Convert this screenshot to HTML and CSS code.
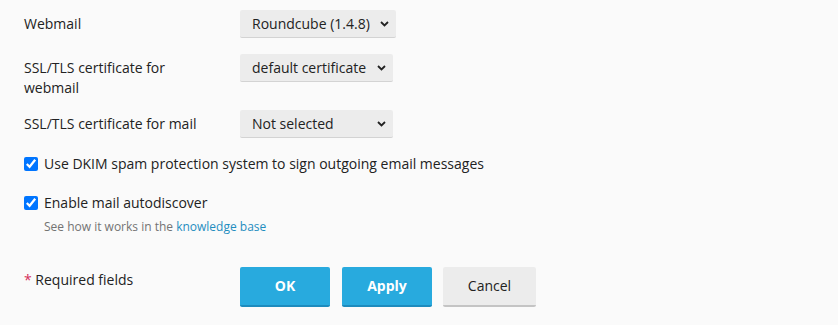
FILE: index.html
```html
<!DOCTYPE html>
<html lang="en">

<head>
    <meta charset="UTF-8">
    <meta name="viewport" content="width=device-width, initial-scale=1.0">
    <title>Mail Settings</title>
    <link rel="stylesheet" href="styles.css">
</head>

<body>
    <form class="form">
        <div class="form-row">
            <label class="form-label" for="webmail">Webmail</label>
            <div class="select-wrap">
                <select id="webmail" class="select">
                    <option>Roundcube (1.4.8)</option>
                    <option>Horde</option>
                    <option>None</option>
                </select>
                <svg class="chevron" width="9" height="6" viewBox="0 0 9 6"><path d="M1 1l3.5 3.5L8 1" fill="none" stroke="#222" stroke-width="1.8"/></svg>
            </div>
        </div>
        <div class="form-row">
            <label class="form-label" for="webmailCert">SSL/TLS certificate for webmail</label>
            <div class="select-wrap">
                <select id="webmailCert" class="select">
                    <option>default certificate</option>
                    <option>Not selected</option>
                </select>
                <svg class="chevron" width="9" height="6" viewBox="0 0 9 6"><path d="M1 1l3.5 3.5L8 1" fill="none" stroke="#222" stroke-width="1.8"/></svg>
            </div>
        </div>
        <div class="form-row">
            <label class="form-label" for="mailCert">SSL/TLS certificate for mail</label>
            <div class="select-wrap">
                <select id="mailCert" class="select">
                    <option>Not selected</option>
                    <option>default certificate</option>
                </select>
                <svg class="chevron" width="9" height="6" viewBox="0 0 9 6"><path d="M1 1l3.5 3.5L8 1" fill="none" stroke="#222" stroke-width="1.8"/></svg>
            </div>
        </div>

        <div class="check-row">
            <input type="checkbox" id="dkim" checked>
            <label for="dkim">Use DKIM spam protection system to sign outgoing email messages</label>
        </div>
        <div class="check-row check-row-last">
            <input type="checkbox" id="autodiscover" checked>
            <label for="autodiscover">Enable mail autodiscover</label>
        </div>
        <p class="hint">See how it works in the <a href="#">knowledge base</a></p>

        <div class="form-footer">
            <div class="required"><span class="star">*</span> Required fields</div>
            <div class="buttons">
                <button type="button" class="btn btn-primary">OK</button>
                <button type="button" class="btn btn-primary">Apply</button>
                <button type="button" class="btn btn-cancel">Cancel</button>
            </div>
        </div>
    </form>
</body>

</html>
```

FILE: styles.css
```css
body {
    margin: 0;
    background: #fafafa;
    font-family: "Open Sans", "Noto Sans", sans-serif;
    font-size: 14px;
    line-height: 20px;
    color: #222;
}

.form {
    padding: 10px 24px;
}

.form-row {
    display: flex;
    min-height: 32px;
    margin-bottom: 12px;
}

.form-label {
    width: 188px;
    flex: none;
    padding: 4px 28px 0 0;
}

.select-wrap {
    position: relative;
    align-self: flex-start;
}

.select {
    appearance: none;
    -webkit-appearance: none;
    font: inherit;
    color: #222;
    background: #ececec;
    border: 0;
    border-bottom: 1px solid #d3d3d3;
    border-radius: 2px;
    padding: 4px 26px 3px 12px;
    height: 28px;
}

.chevron {
    position: absolute;
    right: 7px;
    top: 11px;
    pointer-events: none;
}

.check-row {
    display: flex;
    align-items: center;
    margin-bottom: 19px;
}

.check-row input {
    width: 14px;
    height: 14px;
    margin: 0 6px 0 0;
    accent-color: #0075ff;
}

.check-row-last {
    margin-bottom: 6px;
}

.hint {
    margin: 0 0 32px 20px;
    font-size: 12px;
    line-height: 16px;
    color: #737373;
}

.hint a {
    color: #1f8dbf;
    text-decoration: none;
}

.form-footer {
    display: flex;
}

.required {
    width: 216px;
    padding-top: 3px;
}

.star {
    color: #d4305a;
}

.buttons {
    display: flex;
    gap: 12px;
}

.btn {
    font: inherit;
    min-width: 90px;
    height: 40px;
    padding: 0 24px;
    border: 0;
    border-bottom: 2px solid #c4c4c4;
    border-radius: 2px;
    background: #ececec;
    color: #222;
}

.btn-primary {
    background: #28aade;
    border-bottom-color: #1d8bbd;
    color: #fff;
    font-weight: 700;
}

.btn-cancel {
    min-width: 93px;
    margin-left: -1px;
}
```
